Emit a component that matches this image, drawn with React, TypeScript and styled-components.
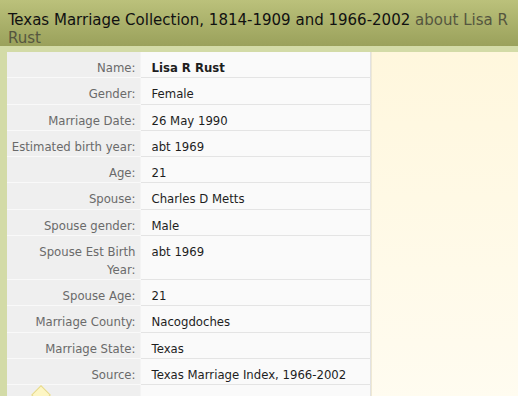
import React from 'react'
import styled, { createGlobalStyle } from 'styled-components'

type Fact = {
  label: string
  value: string
  strong?: boolean
}

const facts: Fact[] = [
  { label: 'Name:', value: 'Lisa R Rust', strong: true },
  { label: 'Gender:', value: 'Female' },
  { label: 'Marriage Date:', value: '26 May 1990' },
  { label: 'Estimated birth year:', value: 'abt 1969' },
  { label: 'Age:', value: '21' },
  { label: 'Spouse:', value: 'Charles D Metts' },
  { label: 'Spouse gender:', value: 'Male' },
  { label: 'Spouse Est Birth Year:', value: 'abt 1969' },
  { label: 'Spouse Age:', value: '21' },
  { label: 'Marriage County:', value: 'Nacogdoches' },
  { label: 'Marriage State:', value: 'Texas' },
  { label: 'Source:', value: 'Texas Marriage Index, 1966-2002' },
]

const GlobalStyle = createGlobalStyle`
  html, body {
    margin: 0;
    padding: 0;
    background: #fffbee;
  }
  body {
    font-family: "DejaVu Sans", Verdana, sans-serif;
  }
`

export default function App() {
  return (
    <>
      <GlobalStyle />
      <Page>
        <Header>
          <Title>
            Texas Marriage Collection, 1814-1909 and 1966-2002 <About>about Lisa R Rust</About>
          </Title>
        </Header>
        <Body>
          <RecordTable>
            <tbody>
              {facts.map((f) => (
                <tr key={f.label}>
                  <Label>{f.label}</Label>
                  <Value $strong={f.strong}>{f.value}</Value>
                </tr>
              ))}
              <tr>
                <Label $filler>
                  <Pointer />
                </Label>
                <Value $filler />
              </tr>
            </tbody>
          </RecordTable>
          <Aside />
        </Body>
      </Page>
    </>
  )
}

const Page = styled.div`
  width: 518px;
  height: 396px;
  overflow: hidden;
  display: flex;
  flex-direction: column;
`

const Header = styled.div`
  height: 48px;
  box-sizing: border-box;
  padding: 10px 2px 0 8px;
  background: linear-gradient(#bbc17b, #9aa15b);
`

const Title = styled.h1`
  margin: 0;
  font-family: "DejaVu Sans Condensed", "DejaVu Sans", Tahoma, sans-serif;
  font-weight: normal;
  font-size: 16.7px;
  line-height: 18px;
  color: #111;
`

const About = styled.span`
  color: #55563f;
`

const Body = styled.div`
  flex: 1;
  display: flex;
  background: #d3dba7;
  padding: 6px 0 0 7px;
`

const RecordTable = styled.table`
  width: 364px;
  border-collapse: collapse;
  font-size: 11.7px;
  line-height: 18px;
  align-self: flex-start;
`

const Label = styled.td<{ $filler?: boolean }>`
  position: relative;
  width: 133px;
  height: ${(p) => (p.$filler ? '30px' : 'auto')};
  box-sizing: border-box;
  padding: 7px 4px 0.27px 4px;
  background: #efefef;
  color: #6a6a6a;
  text-align: right;
  vertical-align: top;
  border-bottom: 1px solid #f9f9f9;
`

const Value = styled.td<{ $strong?: boolean; $filler?: boolean }>`
  padding: 7px 6px 0.27px 11px;
  background: #fafafa;
  color: #1e1e1e;
  font-weight: ${(p) => (p.$strong ? 'bold' : 'normal')};
  vertical-align: top;
  border-bottom: 1px solid ${(p) => (p.$filler ? '#fafafa' : '#e4e4e4')};
  border-left: 1px solid #f4f4f4;
  border-right: 1px solid #e2e2e2;
`

const Pointer = styled.span`
  position: absolute;
  left: 27px;
  top: 3px;
  width: 12px;
  height: 12px;
  background: #fdf6c4;
  border: 1px solid #e6d98e;
  transform: rotate(45deg);
`

const Aside = styled.div`
  flex: 1;
  background: linear-gradient(#fff7dd, #fffcf1);
  border-left: 1px solid #efe9d4;
`
